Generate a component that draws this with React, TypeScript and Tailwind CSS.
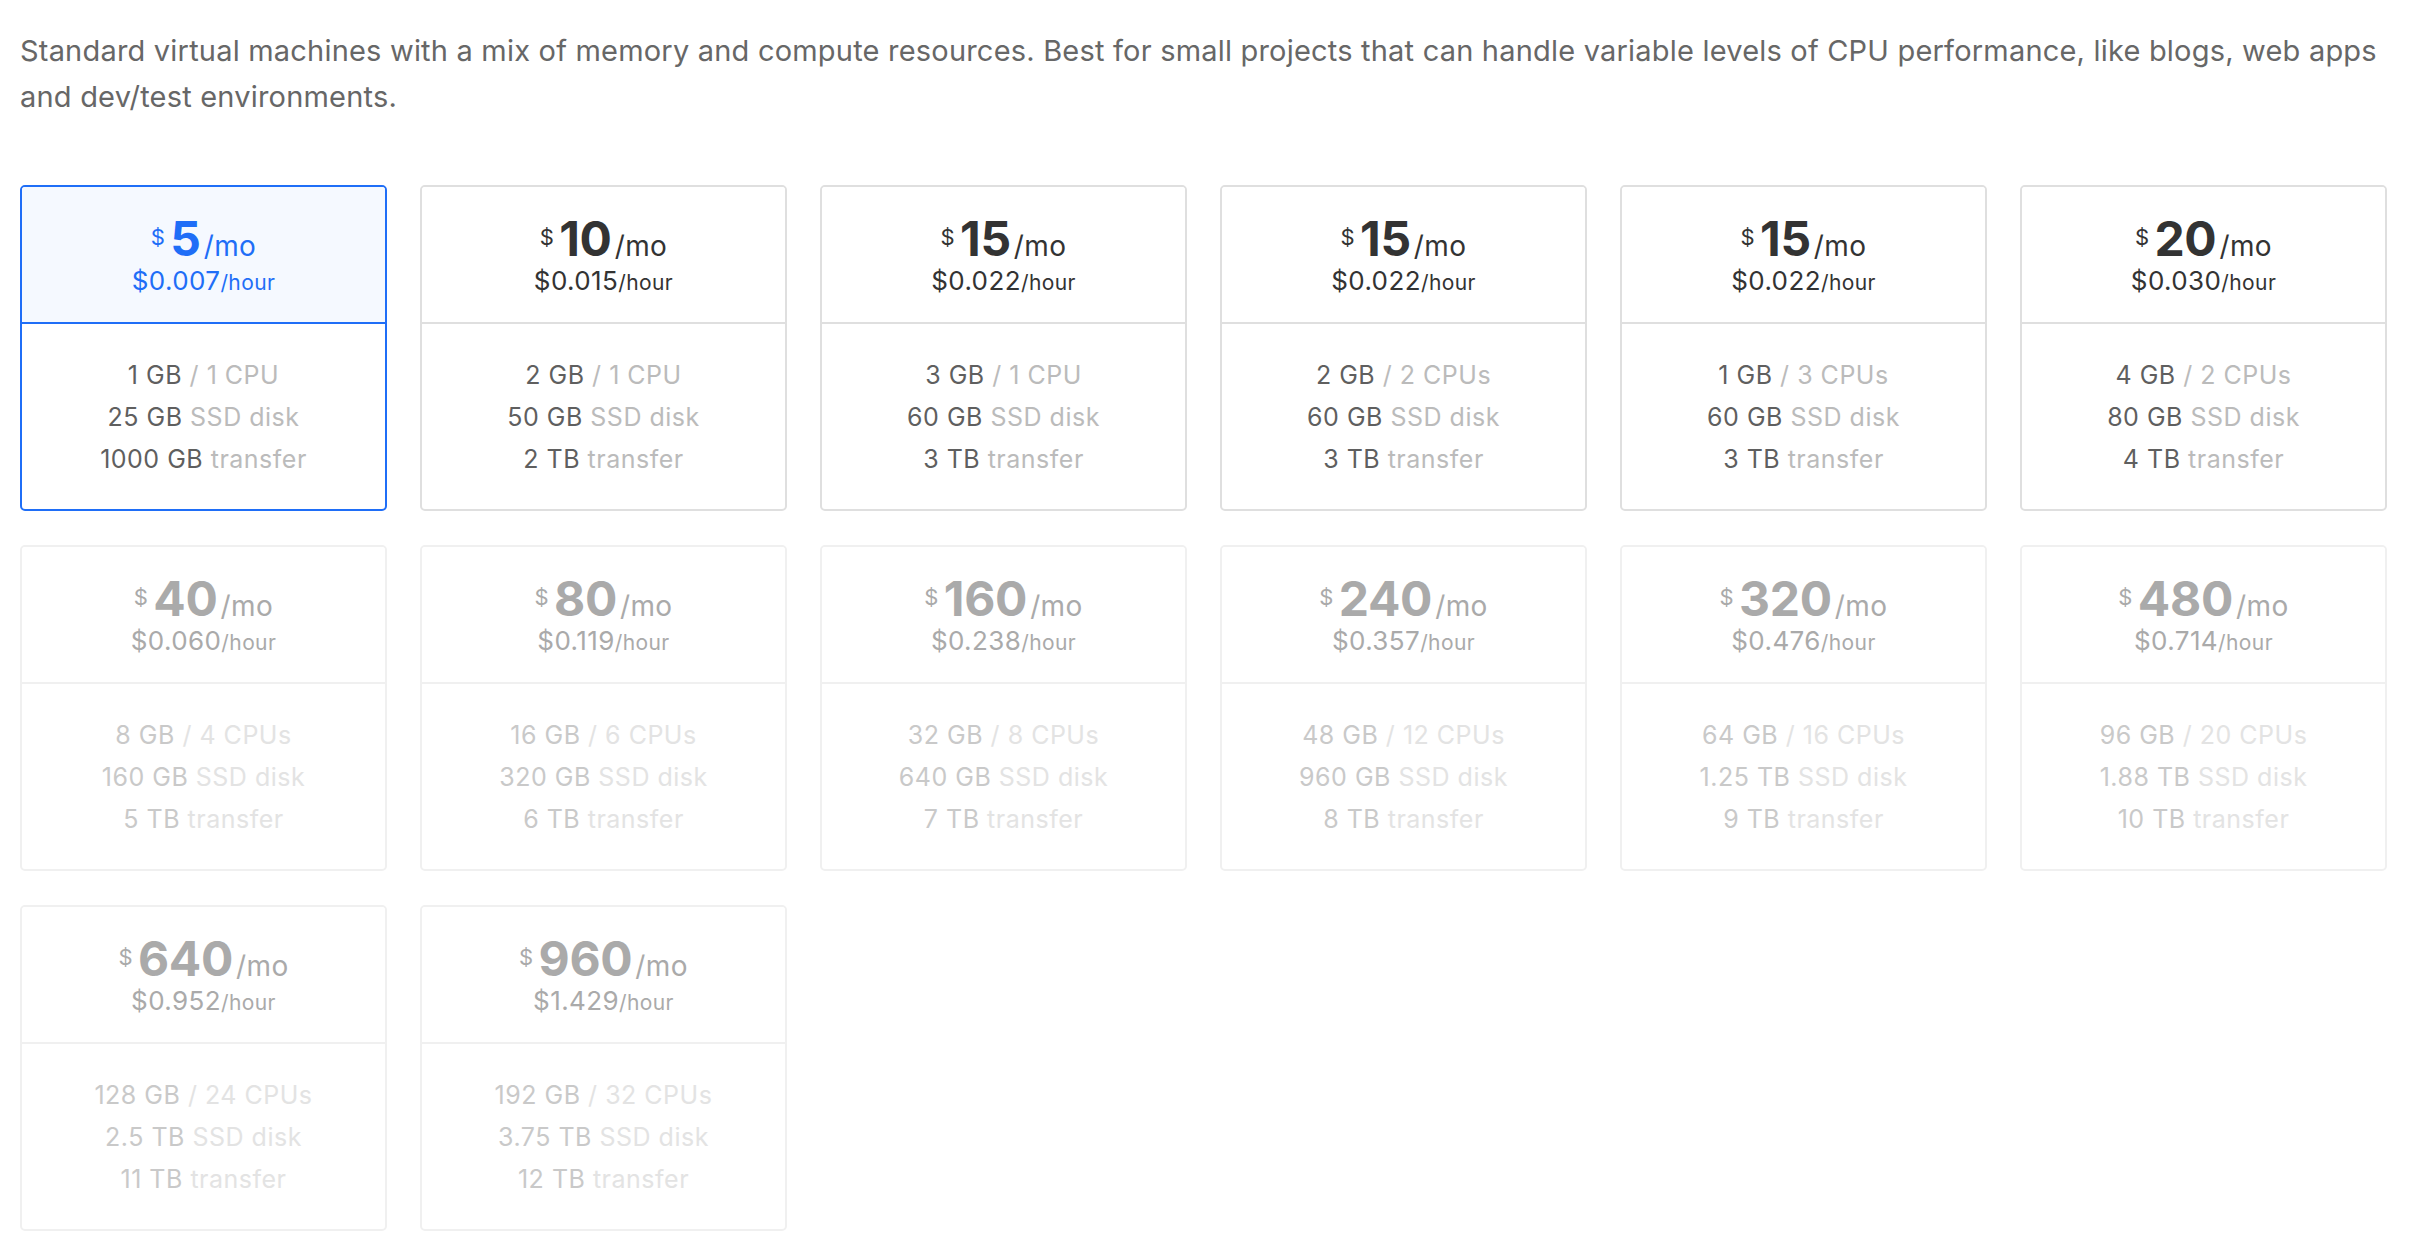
import React from "react";

type Plan = {
  mo: string;
  hr: string;
  mem: string;
  cpu: string;
  disk: string;
  transfer: string;
};

const plans: Plan[] = [
  { mo: "5", hr: "0.007", mem: "1 GB", cpu: "1 CPU", disk: "25 GB", transfer: "1000 GB" },
  { mo: "10", hr: "0.015", mem: "2 GB", cpu: "1 CPU", disk: "50 GB", transfer: "2 TB" },
  { mo: "15", hr: "0.022", mem: "3 GB", cpu: "1 CPU", disk: "60 GB", transfer: "3 TB" },
  { mo: "15", hr: "0.022", mem: "2 GB", cpu: "2 CPUs", disk: "60 GB", transfer: "3 TB" },
  { mo: "15", hr: "0.022", mem: "1 GB", cpu: "3 CPUs", disk: "60 GB", transfer: "3 TB" },
  { mo: "20", hr: "0.030", mem: "4 GB", cpu: "2 CPUs", disk: "80 GB", transfer: "4 TB" },
  { mo: "40", hr: "0.060", mem: "8 GB", cpu: "4 CPUs", disk: "160 GB", transfer: "5 TB" },
  { mo: "80", hr: "0.119", mem: "16 GB", cpu: "6 CPUs", disk: "320 GB", transfer: "6 TB" },
  { mo: "160", hr: "0.238", mem: "32 GB", cpu: "8 CPUs", disk: "640 GB", transfer: "7 TB" },
  { mo: "240", hr: "0.357", mem: "48 GB", cpu: "12 CPUs", disk: "960 GB", transfer: "8 TB" },
  { mo: "320", hr: "0.476", mem: "64 GB", cpu: "16 CPUs", disk: "1.25 TB", transfer: "9 TB" },
  { mo: "480", hr: "0.714", mem: "96 GB", cpu: "20 CPUs", disk: "1.88 TB", transfer: "10 TB" },
  { mo: "640", hr: "0.952", mem: "128 GB", cpu: "24 CPUs", disk: "2.5 TB", transfer: "11 TB" },
  { mo: "960", hr: "1.429", mem: "192 GB", cpu: "32 CPUs", disk: "3.75 TB", transfer: "12 TB" },
];

function Card({ plan, index }: { plan: Plan; index: number }) {
  const selected = index === 0;
  const disabled = index >= 6;

  const cardCls = selected
    ? "border-[#1f6ef7]"
    : disabled
    ? "border-[#f0f0f0]"
    : "border-[#dfdfdf]";
  const topCls = selected
    ? "bg-[#f5f9ff] border-[#1f6ef7] text-[#1f6ef7]"
    : disabled
    ? "bg-white border-[#f0f0f0] text-[#aaaaaa]"
    : "bg-white border-[#dfdfdf] text-[#333333]";
  const valCls = disabled ? "text-[#c9c9c9]" : "text-[#5f5f5f]";
  const labCls = disabled ? "text-[#e3e3e3]" : "text-[#bbbbbb]";

  return (
    <div className={`flex flex-col overflow-hidden rounded-[5px] border-2 bg-white ${cardCls}`}>
      <div className={`flex flex-col items-center border-b-2 pt-[28px] pb-[28px] ${topCls}`}>
        <div className="text-[28px] leading-none whitespace-nowrap tracking-[0.4px]">
          <span className="mr-[5px] align-[11px] text-[22px] leading-none">$</span>
          <span className="text-[48px] font-bold leading-none tracking-[-0.3px]">{plan.mo}</span>
          <span className="ml-[3px]">/mo</span>
        </div>
        <div className="mt-[5px] text-[26px] leading-none whitespace-nowrap tracking-[0.4px]">
          <span>${plan.hr}</span>
          <span className="text-[21px]">/hour</span>
        </div>
      </div>
      <div className="flex flex-col items-center pt-[30px] pb-[29px] text-[25px] leading-[42px] tracking-[0.5px] whitespace-nowrap">
        <div>
          <span className={valCls}>{plan.mem}</span>{" "}
          <span className={labCls}>/ {plan.cpu}</span>
        </div>
        <div>
          <span className={valCls}>{plan.disk}</span>{" "}
          <span className={labCls}>SSD disk</span>
        </div>
        <div>
          <span className={valCls}>{plan.transfer}</span>{" "}
          <span className={labCls}>transfer</span>
        </div>
      </div>
    </div>
  );
}

export default function App() {
  return (
    <div
      className="min-h-[1246px] w-[2422px] bg-white px-[20px] pt-[28px]"
      style={{ fontFamily: "Inter, 'Noto Sans', sans-serif" }}
    >
      <p className="whitespace-nowrap text-[29px] leading-[46px] tracking-[0.2px] text-[#676767]">
        Standard virtual machines with a mix of memory and compute resources. Best for small projects that can handle variable levels of CPU performance, like blogs, web apps
        <br />
        and dev/test environments.
      </p>
      <div className="mt-[65px] grid w-[2367px] grid-cols-6 gap-x-[33px] gap-y-[34px]">
        {plans.map((p, i) => (
          <Card key={i} plan={p} index={i} />
        ))}
      </div>
    </div>
  );
}
